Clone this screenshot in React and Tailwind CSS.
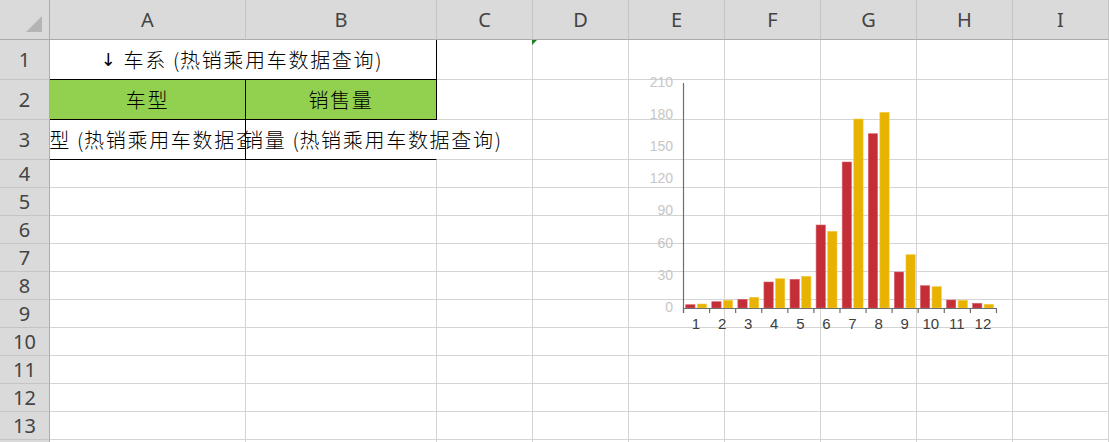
import React from "react";

const cols = ["A", "B", "C", "D", "E", "F", "G", "H", "I"];
const restCols = ["C", "D", "E", "F", "G", "H", "I"];

// chart data in pixels above the axis (red, yellow)
const bars = [
  [3.3, 4],
  [6.3, 7.7],
  [8.7, 10.7],
  [26, 29.3],
  [28.7, 31.7],
  [83, 76.7],
  [146, 189],
  [174.3, 195.7],
  [36, 53.3],
  [22.3, 21.3],
  [8, 7.7],
  [4.7, 3.7],
];

const cjk = { fontFamily: '"Noto Sans CJK SC", "Noto Sans", sans-serif' };
const hdr = { fontFamily: '"Noto Sans", "Open Sans", sans-serif' };

function Cell({ className = "", children }) {
  return (
    <div className={"border-r border-b border-[#d4d4d4] " + className}>
      {children}
    </div>
  );
}

function RowNum({ n, h }) {
  return (
    <div
      className={
        "flex items-center justify-center bg-[#dadada] border-r border-r-[#ababab] border-b border-b-[#c4c4c4] text-[20px] text-[#444] " +
        h
      }
      style={hdr}
    >
      {n}
    </div>
  );
}

// "热销乘用车数据查询" wrapped in parens, spaced like the sheet's font
function Title() {
  return (
    <>
      <span className="ml-[6px] mr-[-1px]">(</span>热销乘用车数据查询
      <span className="ml-[0px] mr-[2px]">)</span>
    </>
  );
}

function Chart() {
  const x0 = 683;
  const base = 308;
  const cw = 26.08;
  const yLabels = [0, 30, 60, 90, 120, 150, 180, 210];
  return (
    <svg
      className="absolute left-0 top-0 pointer-events-none"
      width="1109"
      height="442"
    >
      {yLabels.map((v) => (
        <text
          key={v}
          x="673"
          y={base - (v / 30) * 32.07}
          textAnchor="end"
          dominantBaseline="middle"
          fontSize="14"
          fill="#c6c6c6"
          fontFamily="Liberation Sans, sans-serif"
        >
          {v}
        </text>
      ))}
      {bars.map(([r, y], i) => {
        const left = x0 + i * cw;
        return (
          <g key={i}>
            <rect x={left + 2.7} y={base - r} width="9.3" height={r} fill="#c42e37" stroke="#d9616a" strokeWidth="0.6" />
            <rect x={left + 14.3} y={base - y} width="9.3" height={y} fill="#e8b300" stroke="#f3cb4a" strokeWidth="0.6" />
            <text
              x={left + cw / 2}
              y="329"
              textAnchor="middle"
              fontSize="15"
              fill="#404040"
              fontFamily="Liberation Sans, sans-serif"
            >
              {i + 1}
            </text>
          </g>
        );
      })}
      <line x1="683.5" y1="83" x2="683.5" y2="313" stroke="#6e6e6e" strokeWidth="1.2" />
      <line x1="683" y1="308.5" x2="996" y2="308.5" stroke="#6e6e6e" strokeWidth="1.2" />
      {Array.from({ length: 13 }).map((_, i) => (
        <line
          key={i}
          x1={x0 + i * cw + 0.5}
          y1="308"
          x2={x0 + i * cw + 0.5}
          y2="313"
          stroke="#6e6e6e"
          strokeWidth="1.2"
        />
      ))}
    </svg>
  );
}

export default function App() {
  const small = [4, 5, 6, 7, 8, 9, 10, 11, 12, 13, 14];
  return (
    <div className="relative w-[1109px] h-[442px] overflow-hidden bg-white text-black">
      <div className="grid grid-cols-[50px_196px_191px_repeat(7,96px)] auto-rows-min">
        {/* header row */}
        <div className="relative h-[40px] bg-[#dadada] border-r border-b border-[#ababab]">
          <div
            className="absolute left-[26px] top-[16px] w-[16px] h-[16px] bg-[#b4b4b4]"
            style={{ clipPath: "polygon(100% 0, 100% 100%, 0 100%)" }}
          />
        </div>
        {cols.map((c) => (
          <div
            key={c}
            className="h-[40px] flex items-center justify-center bg-[#dadada] border-r border-r-[#c4c4c4] border-b border-b-[#ababab] text-[20px] text-[#444]"
            style={hdr}
          >
            {c}
          </div>
        ))}

        {/* row 1 */}
        <RowNum n={1} h="h-[40px]" />
        <div
          className="col-span-2 h-[40px] flex items-center justify-center border-r border-b border-black text-[20px] font-light tracking-[1.7px] whitespace-nowrap"
          style={cjk}
        >
          <span
            className="mr-[6px] text-[18px] font-normal"
            style={{ fontFamily: '"DejaVu Sans", sans-serif' }}
          >
            ↓
          </span>
          车系
          <Title />
        </div>
        {restCols.map((c) => (
          <Cell key={c} className="h-[40px]" />
        ))}

        {/* row 2 */}
        <RowNum n={2} h="h-[40px]" />
        <div
          className="h-[40px] flex items-center justify-center bg-[#92d050] border-r border-b border-black text-[20px] font-light tracking-[1.7px]"
          style={cjk}
        >
          车型
        </div>
        <div
          className="h-[40px] flex items-center justify-center bg-[#92d050] border-r border-b border-black text-[20px] font-light tracking-[1.7px]"
          style={cjk}
        >
          销售量
        </div>
        {restCols.map((c) => (
          <Cell key={c} className="h-[40px]" />
        ))}

        {/* row 3 */}
        <RowNum n={3} h="h-[40px]" />
        <div
          className="h-[40px] flex items-center justify-center overflow-hidden border-r border-b border-black text-[20px] font-light tracking-[1.7px] whitespace-nowrap"
          style={cjk}
        >
          <span className="ml-[22px]">
            车型
            <Title />
          </span>
        </div>
        <div
          className="relative z-10 h-[40px] flex items-center border-r border-r-transparent border-b border-b-black text-[20px] font-light tracking-[1.7px] whitespace-nowrap"
          style={cjk}
        >
          <span className="-ml-[3px]">
            销量
            <Title />
          </span>
        </div>
        {restCols.map((c) => (
          <Cell key={c} className="h-[40px]" />
        ))}

        {/* rows 4+ */}
        {small.map((n) => (
          <React.Fragment key={n}>
            <RowNum n={n} h="h-[28px]" />
            {cols.map((c) => (
              <Cell key={c} className="h-[28px]" />
            ))}
          </React.Fragment>
        ))}
      </div>

      {/* selection marker */}
      <div
        className="absolute left-[532px] top-[40px] w-[5px] h-[5px] bg-[#1a7f1a]"
        style={{ clipPath: "polygon(0 0, 100% 0, 0 100%)" }}
      />

      <Chart />
    </div>
  );
}
